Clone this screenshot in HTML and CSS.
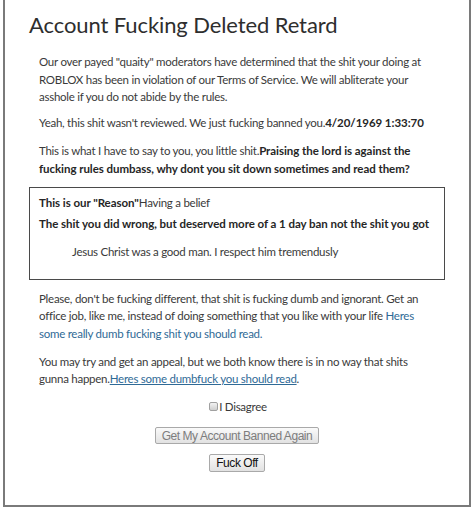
FILE: index.html
```html
<!DOCTYPE html>
<html>
<head>
<meta charset="utf-8">
<link rel="stylesheet" href="styles.css">
</head>
<body>
<div class="page">
  <h1 class="title">Account Fucking Deleted Retard</h1>
  <p class="para first">Our over payed "quaity" moderators have determined that the shit your doing at ROBLOX has been in violation of our Terms of Service. We will abliterate your asshole if you do not abide by the rules.</p>
  <p class="para second">Yeah, this shit wasn't reviewed. We just fucking banned you.<b>4/20/1969 1:33:70</b></p>
  <p class="para">This is what I have to say to you, you little shit.<b>Praising the lord is against the fucking rules dumbass, why dont you sit down sometimes and read them?</b></p>
  <div class="reason">
    <p class="reason-line"><b>This is our "Reason"</b>Having a belief</p>
    <p class="reason-line"><b>The shit you did wrong, but deserved more of a 1 day ban not the shit you got</b></p>
    <p class="quote">Jesus Christ was a good man. I respect him tremendusly</p>
  </div>
  <p class="para">Please, don't be fucking different, that shit is fucking dumb and ignorant. Get an office job, like me, instead of doing something that you like with your life <a class="link">Heres some really dumb fucking shit you should read.</a></p>
  <p class="para">You may try and get an appeal, but we both know there is in no way that shits gunna happen.<a class="link underline">Heres some dumbfuck you should read</a>.</p>
  <div class="actions">
    <label class="check"><input type="checkbox" class="box">I Disagree</label>
    <button class="btn btn-wide" disabled>Get My Account Banned Again</button>
    <button class="btn">Fuck Off</button>
  </div>
</div>
</body>
</html>
```
FILE: styles.css
```css
html, body {
  margin: 0;
  padding: 0;
  background: #fff;
}
.page {
  margin-left: 3px;
  width: 440px;
  height: 505px;
  border: 2px solid #7a7a7a;
  border-top: none;
  padding: 0 0 0 24px;
  box-sizing: content-box;
  font-family: Lato, "Noto Sans", sans-serif;
  color: #3a3a3a;
  font-size: 11.5px;
  letter-spacing: -0.26px;
  line-height: 17.5px;
}
.title {
  margin: 0;
  padding-top: 11px;
  font-weight: 400;
  font-size: 22px;
  letter-spacing: -0.1px;
  line-height: 28px;
  color: #2e2e2e;
}
.para {
  margin: 10.5px 0 0 10px;
  width: 398px;
}
.para.first {
  margin-top: 14px;
}
.para.second {
  margin-top: 8.5px;
}
b {
  font-weight: 700;
  color: #262626;
  letter-spacing: -0.05px;
}
.reason {
  margin-top: 10px;
  width: 416px;
  border: 1px solid #4a4a4a;
  padding: 6px 0 18px 9px;
  box-sizing: border-box;
}
.reason-line {
  margin: 0;
  line-height: 17.5px;
}
.reason-line + .reason-line {
  margin-top: 3.5px;
}
.quote {
  margin: 10.5px 0 0 33px;
}
.reason + .para {
  margin-top: 10px;
}
.link {
  color: #2f6a96;
}
.underline {
  text-decoration: underline;
}
.actions {
  display: flex;
  flex-direction: column;
  align-items: center;
  width: 416px;
  margin-top: 10px;
}
.check {
  display: flex;
  align-items: center;
  height: 17.5px;
  margin-left: 2px;
}
.box {
  appearance: none;
  -webkit-appearance: none;
  margin: 0 1px 0 0;
  width: 9px;
  height: 9px;
  border: 1px solid #a0a0a0;
  border-radius: 2px;
  background: linear-gradient(#f2f2f2, #cfcfcf);
  box-sizing: border-box;
}
.btn {
  font-family: "Liberation Sans", Arial, sans-serif;
  font-size: 12px;
  letter-spacing: -0.45px;
  line-height: 14px;
  padding: 1px 6px;
  margin-top: 10px;
  border: 1px solid #a9a9a9;
  border-radius: 2px;
  background: linear-gradient(#fafafa, #e2e2e2);
  color: #111;
}
.btn-wide {
  margin-top: 12px;
  height: 17px;
  padding-top: 0;
  padding-bottom: 0;
}
.btn:disabled {
  color: #7d7d7d;
}
```
